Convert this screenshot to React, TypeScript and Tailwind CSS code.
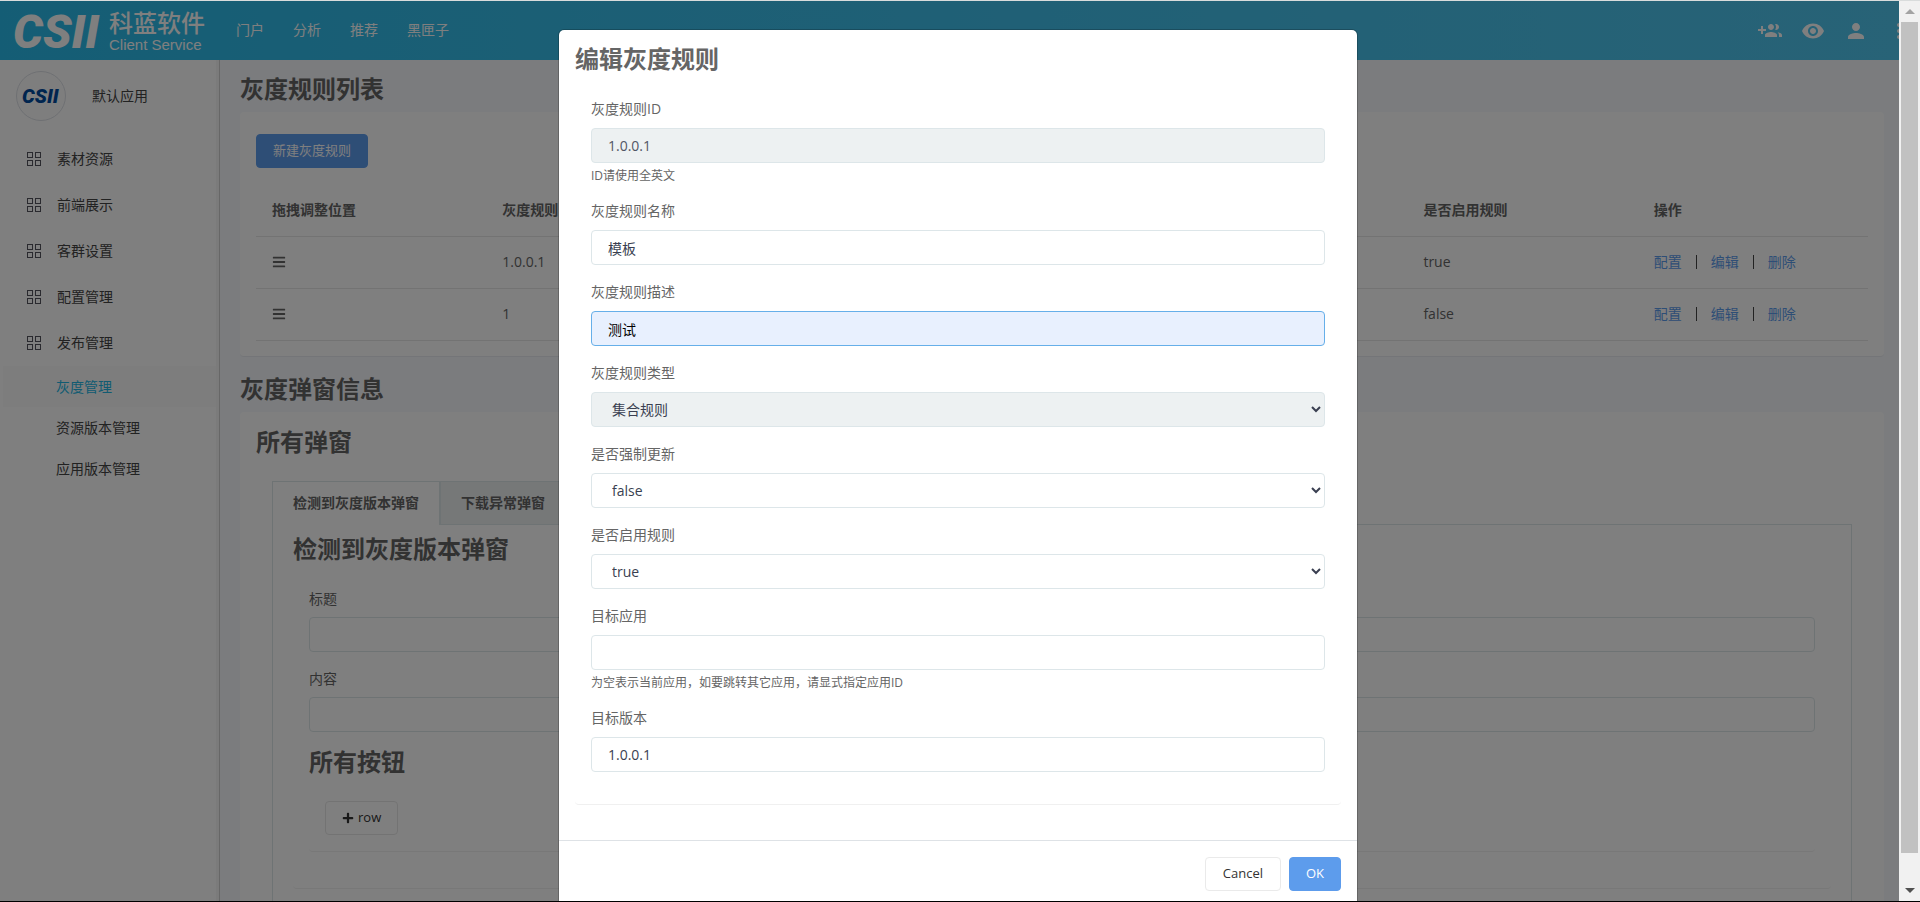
import type { ReactNode } from 'react';
import { FaBars, FaPlus } from 'react-icons/fa';
import { MdMoreVert, MdPerson, MdVisibility } from 'react-icons/md';

type Rule = {
  id: string;
  name: string;
  desc: string;
  force: string;
  enabled: string;
};

const navItems = ['门户', '分析', '推荐', '黑匣子'];

const menuItems = ['素材资源', '前端展示', '客群设置', '配置管理', '发布管理'];

const subItems = ['灰度管理', '资源版本管理', '应用版本管理'];

const columns = [
  '拖拽调整位置',
  '灰度规则ID',
  '灰度规则名称',
  '灰度规则描述',
  '是否强制更新',
  '是否启用规则',
  '操作',
];

const rules: Rule[] = [
  { id: '1.0.0.1', name: '模板', desc: '测试', force: 'false', enabled: 'true' },
  { id: '1', name: '1', desc: '1', force: 'false', enabled: 'false' },
];

const actions = ['配置', '编辑', '删除'];

const inputClass =
  'block h-[35px] w-full rounded border border-[#dde6e9] bg-white px-4 text-sm text-[#3a3f51] outline-none';

function GroupAddIcon() {
  return (
    <svg viewBox="0 0 24 24" className="size-6 fill-current">
      <path d="M8 10H5V7H3v3H0v2h3v3h2v-3h3v-2zm10 1c1.66 0 2.99-1.34 2.99-3S19.66 5 18 5c-.32 0-.63.05-.91.14.57.81.9 1.79.9 2.86s-.34 2.04-.9 2.86c.28.09.59.14.91.14zm-5 0c1.66 0 2.99-1.34 2.99-3S14.66 5 13 5c-1.66 0-3 1.34-3 3s1.34 3 3 3zm6.62 2.16c.83.73 1.38 1.66 1.38 2.84v2h3v-2c0-1.54-2.37-2.49-4.38-2.84zM13 13c-2 0-6 1-6 3v2h12v-2c0-2-4-3-6-3z" />
    </svg>
  );
}

function GridIcon() {
  return (
    <svg viewBox="0 0 14 14" className="size-3.5 fill-none stroke-[#55555f]">
      <rect x="0.5" y="0.5" width="5" height="5" />
      <rect x="8.5" y="0.5" width="5" height="5" />
      <rect x="0.5" y="8.5" width="5" height="5" />
      <rect x="8.5" y="8.5" width="5" height="5" />
    </svg>
  );
}

function Header() {
  return (
    <header className="flex h-[59px] shrink-0 items-center overflow-hidden bg-linear-to-r from-[#29bbea] to-[#50c6ee] text-white">
      <div className="flex w-[222px] shrink-0 items-center pl-3.5">
        <svg viewBox="0 0 86 36" className="h-9 w-[86px] shrink-0 overflow-visible fill-current">
          <text x="-1" y="35" fontSize="47" fontWeight="900" fontStyle="italic" fontFamily="Roboto">
            CSII
          </text>
        </svg>
        <div className="ml-[9px] whitespace-nowrap">
          <div className="text-2xl leading-7 font-medium">科蓝软件</div>
          <div className="font-['Liberation_Sans'] text-[15px] leading-4">Client Service</div>
        </div>
      </div>
      <nav className="flex flex-1 gap-[29px] pb-0.5 pl-3.5 text-sm">
        {navItems.map((item) => (
          <a key={item} href="#">
            {item}
          </a>
        ))}
      </nav>
      <div className="-mr-3 flex gap-[19px]">
        <button aria-label="添加用户">
          <GroupAddIcon />
        </button>
        <button aria-label="预览">
          <MdVisibility className="size-6" />
        </button>
        <button aria-label="用户">
          <MdPerson className="size-6" />
        </button>
        <button aria-label="更多">
          <MdMoreVert className="size-6" />
        </button>
      </div>
    </header>
  );
}

function Sidebar() {
  return (
    <aside className="flex w-[220px] shrink-0 border-r border-[#cfcfcf] bg-white text-sm text-[#444]">
      <div className="flex-1">
        <div className="flex h-[72px] items-center pl-4">
          <div className="flex size-[50px] items-center justify-center rounded-full border border-[#dde0e6] bg-[#fdfdfd]">
            <svg viewBox="0 0 38 16" className="h-4 w-[38px] overflow-visible fill-[#004a9f]">
              <text x="0" y="15" fontSize="20" fontWeight="900" fontStyle="italic" fontFamily="Roboto">
                CSII
              </text>
            </svg>
          </div>
          <span className="ml-[26px]">默认应用</span>
        </div>
        <ul className="mt-1">
          {menuItems.map((item) => (
            <li key={item}>
              <a href="#" className="flex h-[46px] items-center gap-4 pl-[27px]">
                <GridIcon />
                {item}
              </a>
            </li>
          ))}
        </ul>
        <ul className="pl-[3px]">
          {subItems.map((item, index) => (
            <li key={item}>
              <a
                href="#"
                className={
                  index === 0
                    ? 'flex h-[41px] items-center bg-[#fbfbfb] pl-[53px] text-[#23b7e5]'
                    : 'flex h-[41px] items-center pl-[53px]'
                }
              >
                {item}
              </a>
            </li>
          ))}
        </ul>
      </div>
      <div className="w-[3px] bg-[#f7f7f7]" />
    </aside>
  );
}

function RuleTable() {
  return (
    <table className="mt-4 w-full table-fixed border-collapse text-left text-sm">
      <thead>
        <tr className="h-[52px]">
          {columns.map((column) => (
            <th key={column} className="px-4 font-bold">
              {column}
            </th>
          ))}
        </tr>
      </thead>
      <tbody>
        {rules.map((rule) => (
          <tr key={rule.id} className="h-[52px] border-y border-[#e6e6e6]">
            <td className="px-4">
              <FaBars className="size-3.5" />
            </td>
            <td className="px-4">{rule.id}</td>
            <td className="px-4">{rule.name}</td>
            <td className="px-4">{rule.desc}</td>
            <td className="px-4">{rule.force}</td>
            <td className="px-4">{rule.enabled}</td>
            <td className="px-4">
              <div className="flex items-center gap-3.5">
                {actions.map((action, index) => (
                  <div key={action} className="flex items-center gap-3.5">
                    {index > 0 && <span className="h-3.5 w-px bg-[#444]" />}
                    <a href="#" className="text-[#5d9cec]">
                      {action}
                    </a>
                  </div>
                ))}
              </div>
            </td>
          </tr>
        ))}
      </tbody>
    </table>
  );
}

function PopupPanel() {
  return (
    <div className="px-4">
      <div className="mt-[19px] flex text-sm font-bold" role="tablist">
        <button
          role="tab"
          aria-selected="true"
          className="z-1 -mb-px h-11 border border-b-0 border-[#dde6e9] bg-white px-5 font-bold"
        >
          检测到灰度版本弹窗
        </button>
        <button
          role="tab"
          aria-selected="false"
          className="-mb-px h-11 border border-[#dde6e9] bg-[#ecf0f1] px-5 font-bold"
        >
          下载异常弹窗
        </button>
      </div>
      <div className="border border-[#dde6e9] px-5 pt-1 pb-6">
        <h3 className="text-2xl leading-10 font-bold">检测到灰度版本弹窗</h3>
        <div className="rounded border-b border-[#f0f0f0] px-4 pt-[19px] pb-9">
          <div className="mb-4">
            <label htmlFor="popup-title" className="mb-2 block text-sm leading-[21px]">
              标题
            </label>
            <input id="popup-title" className={inputClass} />
          </div>
          <div className="mb-2.5">
            <label htmlFor="popup-content" className="mb-2 block text-sm leading-[21px]">
              内容
            </label>
            <input id="popup-content" className={inputClass} />
          </div>
          <h3 className="text-2xl leading-10 font-bold">所有按钮</h3>
          <div className="rounded border-b border-[#f0f0f0] px-4 pt-[19px] pb-4">
            <button className="flex h-[34px] items-center gap-1 rounded-sm border border-[#e6e6e6] px-4 text-[13px] text-[#333]">
              <FaPlus className="size-3" />
              row
            </button>
          </div>
        </div>
      </div>
    </div>
  );
}

function Field({
  id,
  label,
  hint,
  children,
}: {
  id: string;
  label: string;
  hint?: string;
  children: ReactNode;
}) {
  return (
    <div className="mb-4">
      <label htmlFor={id} className="mb-2 block text-sm leading-[22px]">
        {label}
      </label>
      {children}
      {hint && <p className="mt-1 text-xs leading-[17px]">{hint}</p>}
    </div>
  );
}

function EditDialog() {
  return (
    <div className="absolute inset-0 z-20 flex items-start justify-center pt-7 pr-1">
      <div
        role="dialog"
        aria-labelledby="dialog-title"
        className="w-[800px] rounded-md border border-black/20 bg-white bg-clip-padding text-[#656565]"
      >
        <div className="px-4 pt-[9px] pb-[35px]">
          <h2 id="dialog-title" className="text-2xl leading-10 font-bold">
            编辑灰度规则
          </h2>
          <form className="rounded border-b border-[#f0f0f0] px-4 pt-[19px] pb-4">
            <Field id="rule-id" label="灰度规则ID" hint="ID请使用全英文">
              <input
                id="rule-id"
                disabled
                defaultValue="1.0.0.1"
                className="block h-[35px] w-full rounded border border-[#dde6e9] bg-[#edf1f2] px-4 text-sm text-[#515665]"
              />
            </Field>
            <Field id="rule-name" label="灰度规则名称">
              <input id="rule-name" defaultValue="模板" className={inputClass} />
            </Field>
            <Field id="rule-desc" label="灰度规则描述">
              <input
                id="rule-desc"
                defaultValue="测试"
                className="block h-[35px] w-full rounded border border-[#66afe9] bg-[#e8f0fe] px-4 text-sm text-black outline-none"
              />
            </Field>
            <Field id="rule-type" label="灰度规则类型">
              <select
                id="rule-type"
                disabled
                className="block h-[35px] w-full rounded border border-[#dde6e9] bg-[#edf1f2] px-4 text-sm text-[#3a3f51] opacity-100"
              >
                <option>集合规则</option>
              </select>
            </Field>
            <Field id="rule-force" label="是否强制更新">
              <select id="rule-force" defaultValue="false" className={inputClass}>
                <option>true</option>
                <option>false</option>
              </select>
            </Field>
            <Field id="rule-enabled" label="是否启用规则">
              <select id="rule-enabled" defaultValue="true" className={inputClass}>
                <option>true</option>
                <option>false</option>
              </select>
            </Field>
            <Field
              id="target-app"
              label="目标应用"
              hint="为空表示当前应用，如要跳转其它应用，请显式指定应用ID"
            >
              <input id="target-app" className={inputClass} />
            </Field>
            <Field id="target-version" label="目标版本">
              <input id="target-version" defaultValue="1.0.0.1" className={inputClass} />
            </Field>
          </form>
        </div>
        <div className="flex justify-end gap-2 border-t border-[#dee2e6] px-4 py-4 text-[13px]">
          <button className="h-[34px] min-w-[76px] rounded-sm border border-[#eaeaea] px-4 text-[#333]">
            Cancel
          </button>
          <button className="h-[34px] rounded-sm border border-[#5d9cec] bg-[#5d9cec] px-4 text-white">
            OK
          </button>
        </div>
      </div>
    </div>
  );
}

function Scrollbar() {
  return (
    <div className="flex w-[21px] shrink-0 flex-col bg-[#f1f1f1] px-0.5" aria-hidden="true">
      <div className="flex h-[21px] items-center justify-center">
        <svg viewBox="0 0 10 5" className="h-[5px] w-2.5 fill-[#a3a3a3]">
          <path d="M5 0L10 5H0z" />
        </svg>
      </div>
      <div className="flex-1 bg-[#c1c1c1]" />
      <div className="flex h-12 items-end justify-center pb-2">
        <svg viewBox="0 0 10 5" className="h-[5px] w-2.5 fill-[#505050]">
          <path d="M5 5L10 0H0z" />
        </svg>
      </div>
    </div>
  );
}

export default function App() {
  return (
    <div className="relative flex h-screen overflow-hidden border-t border-b border-t-[#d9dcdc] border-b-black bg-white font-['Open_Sans','Noto_Sans_CJK_SC',sans-serif] text-[#656565]">
      <div className="relative flex min-w-0 flex-1 flex-col overflow-hidden">
        <Header />
        <div className="flex min-h-0 flex-1">
          <Sidebar />
          <main className="min-w-0 flex-1 overflow-hidden bg-[#f6f8fc] pt-[9px] pr-[15px] pl-5">
            <h1 className="mb-[3px] text-2xl leading-10 font-bold">灰度规则列表</h1>
            <section className="rounded border-b border-[#e8ebf0] bg-white px-4 pt-[22px] pb-[15px]">
              <button className="h-[34px] rounded-sm border border-[#5d9cec] bg-[#5d9cec] px-4 text-[13px] text-white">
                新建灰度规则
              </button>
              <RuleTable />
            </section>
            <h1 className="mt-3 mb-[3px] text-2xl leading-10 font-bold">灰度弹窗信息</h1>
            <section className="rounded bg-white px-4 pt-2.5 pb-4">
              <h2 className="text-2xl leading-10 font-bold">所有弹窗</h2>
              <PopupPanel />
            </section>
          </main>
        </div>
        <div className="absolute inset-0 z-10 bg-black/50" />
      </div>
      <Scrollbar />
      <EditDialog />
    </div>
  );
}
